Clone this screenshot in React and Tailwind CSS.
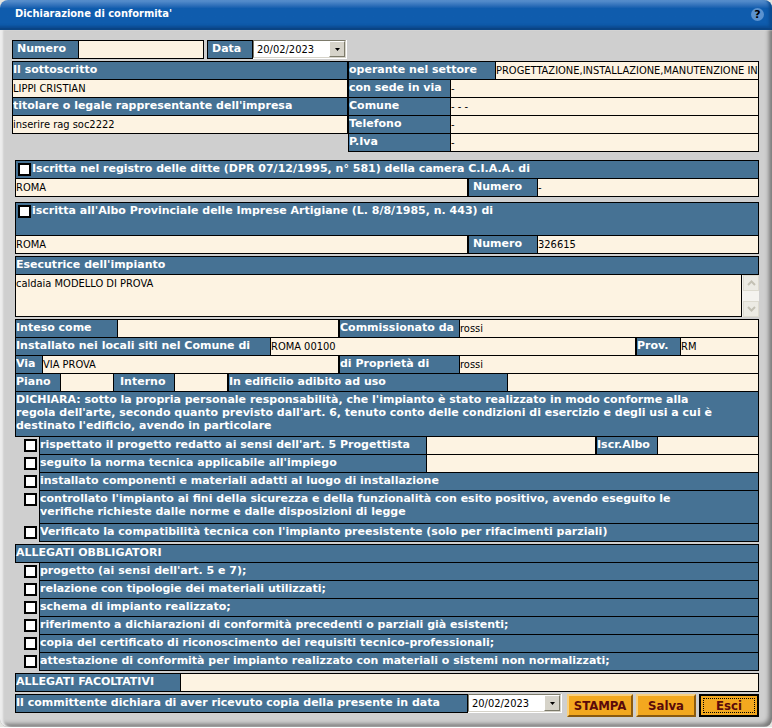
import React, { useState } from "react";

const SETTORE =
  "PROGETTAZIONE,INSTALLAZIONE,MANUTENZIONE IN EFFICIENZA DI IMPIANTI";

const labelBase =
  "shrink-0 bg-[#467294] text-white font-bold text-[11px] leading-[15px] border-r border-b border-black whitespace-nowrap overflow-hidden";

const Label = ({ htmlFor, className = "w-full", children }) => (
  <label htmlFor={htmlFor} className={`${labelBase} h-full ${className}`}>
    {children}
  </label>
);

const Field = ({ id, value = "", className = "flex-1" }) => (
  <input
    id={id}
    type="text"
    defaultValue={value}
    className={`h-full min-w-0 bg-[#fdf3e2] border-r border-b border-black text-[11px] leading-[15px] text-black outline-none font-['DejaVu_Sans_Condensed','Noto_Sans',sans-serif] ${className}`}
  />
);

const Row = ({ children }) => (
  <div className="flex h-[18px] border-l border-black">{children}</div>
);

const Check = ({ id, className = "" }) => (
  <input
    id={id}
    type="checkbox"
    className={`block shrink-0 appearance-none w-[13px] h-[13px] bg-white border-2 border-black checked:bg-black ${className}`}
  />
);

const DateSelect = ({ id }) => (
  <div className="relative shrink-0 w-[94px] h-[19px] border-r border-b border-white">
    <select
      id={id}
      defaultValue="20/02/2023"
      className="block appearance-none w-full h-full bg-white border border-t-[#7c7a6a] border-l-[#7c7a6a] border-r-[#d6d3c9] border-b-[#d6d3c9] pl-[3px] pt-px text-[11px] leading-[15px] text-black outline-none font-['DejaVu_Sans_Condensed','Noto_Sans',sans-serif]"
    >
      <option>20/02/2023</option>
    </select>
    <span className="pointer-events-none absolute right-px top-px bottom-px w-4 flex items-center justify-center bg-[#d6d3c9] border border-t-white border-l-white border-r-[#7c7a6a] border-b-[#7c7a6a]">
      <svg width="5" height="3" viewBox="0 0 5 3">
        <path d="M0 0h5L2.5 3z" fill="#000" />
      </svg>
    </span>
  </div>
);

const CheckRow = ({ id, text, tall, children }) => (
  <div className={tall ? "flex h-[33px]" : "flex h-[18px]"}>
    <div className="shrink-0 w-6 pl-[9px] pt-[2px]">
      <Check id={id} />
    </div>
    {children ? (
      children
    ) : (
      <label
        htmlFor={id}
        className={
          tall
            ? "flex-1 min-w-0 bg-[#467294] text-white font-bold text-[11px] leading-[13px] border-l border-r border-b border-black pt-px"
            : "flex-1 min-w-0 bg-[#467294] text-white font-bold text-[11px] leading-[15px] border-l border-r border-b border-black whitespace-nowrap overflow-hidden"
        }
      >
        {text}
      </label>
    )}
  </div>
);

const Button = ({ className, children, onClick }) => (
  <button
    type="button"
    onClick={onClick}
    className={`h-[23px] bg-[#f3a81f] text-[#5a0a0a] font-bold text-[13px] leading-none font-['DejaVu_Sans_Condensed','Noto_Sans',sans-serif] ${className}`}
  >
    {children}
  </button>
);

const obbligatori = [
  "progetto (ai sensi dell'art. 5 e 7);",
  "relazione con tipologie dei materiali utilizzati;",
  "schema di impianto realizzato;",
  "riferimento a dichiarazioni di conformità precedenti o parziali già esistenti;",
  "copia del certificato di riconoscimento dei requisiti tecnico-professionali;",
  "attestazione di conformità per impianto realizzato con materiali o sistemi non normalizzati;",
];

const App = () => {
  const [open, setOpen] = useState(true);

  if (!open) return null;

  return (
    <div className="w-full bg-[#e4e4e0] font-['DejaVu_Sans',sans-serif]">
      <header className="flex items-center justify-between h-[30px] rounded-t-lg pl-[15px] pr-2 bg-linear-to-b from-[#5c93cf] via-[#0f5cad] via-30% to-[#0f5cad] border-b-2 border-[#0a4484] shadow-[inset_-3px_-2px_3px_#0b4a8f]">
        <h1 className="text-white font-bold text-[11px] font-['DejaVu_Sans_Condensed','Noto_Sans',sans-serif]">
          Dichiarazione di conformita'
        </h1>
        <button
          type="button"
          aria-label="Aiuto"
          className="w-[13px] h-[13px] rounded-full bg-[#5b92cf] text-black text-[11px] leading-[13px] font-bold"
        >
          ?
        </button>
      </header>

      <form className="bg-[#cfcfcf] rounded-b-lg pl-[15px] pr-[13px] pt-[10px] pb-[10px] shadow-[inset_3px_0_2px_#ededed,inset_-3px_-3px_4px_#777]">
        <div className="-ml-[3px]">
          <div className="flex gap-[3px] mb-[2px]">
            <div className="flex w-[192px] h-[19px] border-t border-l border-black">
              <Label htmlFor="numero" className="w-[66px] pl-1">
                Numero
              </Label>
              <Field id="numero" />
            </div>
            <div className="flex">
              <div className="flex h-[19px] border-t border-l border-black">
                <Label htmlFor="data" className="w-[45px] pl-1">
                  Data
                </Label>
              </div>
              <DateSelect id="data" />
            </div>
          </div>

          <div className="flex items-start">
            <div className="w-[336px] shrink-0 border-t border-black">
              <Row>
                <Label htmlFor="sottoscritto">Il sottoscritto</Label>
              </Row>
              <Row>
                <Field id="sottoscritto" value="LIPPI CRISTIAN" />
              </Row>
              <Row>
                <Label htmlFor="impresa">
                  titolare o legale rappresentante dell'impresa
                </Label>
              </Row>
              <Row>
                <Field id="impresa" value="inserire rag soc2222" />
              </Row>
            </div>
            <div className="flex-1 min-w-0 border-t border-black">
              <Row>
                <Label htmlFor="settore" className="w-[147px]">
                  operante nel settore
                </Label>
                <Field id="settore" value={SETTORE} />
              </Row>
              <Row>
                <Label htmlFor="sede" className="w-[102px]">
                  con sede in via
                </Label>
                <Field id="sede" value="-" />
              </Row>
              <Row>
                <Label htmlFor="comune" className="w-[102px]">
                  Comune
                </Label>
                <Field id="comune" value="- - -" />
              </Row>
              <Row>
                <Label htmlFor="telefono" className="w-[102px]">
                  Telefono
                </Label>
                <Field id="telefono" value="-" />
              </Row>
              <Row>
                <Label htmlFor="piva" className="w-[102px]">
                  P.Iva
                </Label>
                <Field id="piva" value="-" />
              </Row>
            </div>
          </div>
        </div>

        <div className="mt-2 border-t border-black">
          <div className="flex h-[18px] pl-[2px] bg-[#467294] border-l border-r border-b border-black">
            <Check id="registro" className="mt-[2px]" />
            <label
              htmlFor="registro"
              className="text-white font-bold text-[11px] leading-[15px] pl-px whitespace-nowrap"
            >
              Iscritta nel registro delle ditte (DPR 07/12/1995, n° 581) della
              camera C.I.A.A. di
            </label>
          </div>
          <Row>
            <Field id="ciaa" value="ROMA" />
            <Label htmlFor="numeroCiaa" className="w-[70px] pl-1 border-l">
              Numero
            </Label>
            <Field
              id="numeroCiaa"
              value="-"
              className="w-[221px] shrink-0"
            />
          </Row>
        </div>

        <div className="mt-[5px] border-t border-black">
          <div className="flex h-[33px] pl-[2px] bg-[#467294] border-l border-r border-b border-black">
            <Check id="albo" className="mt-[2px]" />
            <label
              htmlFor="albo"
              className="text-white font-bold text-[11px] leading-[15px] pl-px whitespace-nowrap"
            >
              iscritta all'Albo Provinciale delle Imprese Artigiane (L.
              8/8/1985, n. 443) di
            </label>
          </div>
          <Row>
            <Field id="alboComune" value="ROMA" />
            <Label htmlFor="numeroAlbo" className="w-[70px] pl-1 border-l">
              Numero
            </Label>
            <Field
              id="numeroAlbo"
              value="326615"
              className="w-[221px] shrink-0"
            />
          </Row>
        </div>

        <div className="mt-[2px] border-t border-black">
          <Row>
            <Label htmlFor="impianto">Esecutrice dell'impianto</Label>
          </Row>
          <div className="flex h-[42px]">
            <textarea
              id="impianto"
              defaultValue="caldaia MODELLO DI PROVA"
              className="flex-1 min-w-0 resize-none overflow-hidden bg-[#fdf3e2] border-l border-r border-b border-black pt-px text-[11px] leading-[15px] text-black outline-none font-['DejaVu_Sans_Condensed','Noto_Sans',sans-serif]"
            />
            <div className="w-[17px] flex flex-col justify-between bg-[#f4f3ef] pl-px">
              <button
                type="button"
                aria-label="Scorri su"
                className="h-4 flex items-center justify-center bg-[#ecebe4] border border-[#dddbd0]"
              >
                <svg width="9" height="6" viewBox="0 0 9 6">
                  <path
                    d="M1 5l3.5-3.5L8 5"
                    fill="none"
                    stroke="#c3c1b4"
                    strokeWidth="2"
                  />
                </svg>
              </button>
              <button
                type="button"
                aria-label="Scorri giù"
                className="h-4 flex items-center justify-center bg-[#ecebe4] border border-[#dddbd0]"
              >
                <svg width="9" height="6" viewBox="0 0 9 6">
                  <path
                    d="M1 1l3.5 3.5L8 1"
                    fill="none"
                    stroke="#c3c1b4"
                    strokeWidth="2"
                  />
                </svg>
              </button>
            </div>
          </div>
        </div>

        <div className="mt-[2px] border-t border-black">
          <Row>
            <Label htmlFor="inteso" className="w-[102px]">
              Inteso come
            </Label>
            <Field id="inteso" />
            <Label htmlFor="commissionato" className="w-[121px] border-l">
              Commissionato da
            </Label>
            <Field
              id="commissionato"
              value="rossi"
              className="w-[299px] shrink-0"
            />
          </Row>
          <Row>
            <Label htmlFor="locali" className="w-[255px]">
              Installato nei locali siti nel Comune di
            </Label>
            <Field id="locali" value="ROMA 00100" />
            <Label htmlFor="prov" className="w-[45px] border-l">
              Prov.
            </Label>
            <Field id="prov" value="RM" className="w-[78px] shrink-0" />
          </Row>
          <Row>
            <Label htmlFor="via" className="w-[27px]">
              Via
            </Label>
            <Field id="via" value="VIA PROVA" />
            <Label htmlFor="proprieta" className="w-[121px] border-l">
              di Proprietà di
            </Label>
            <Field
              id="proprieta"
              value="rossi"
              className="w-[299px] shrink-0"
            />
          </Row>
          <Row>
            <Label htmlFor="piano" className="w-[45px]">
              Piano
            </Label>
            <Field id="piano" className="w-[53px] shrink-0" />
            <Label htmlFor="interno" className="w-[61px] pl-1.5">
              Interno
            </Label>
            <Field id="interno" className="w-[53px] shrink-0" />
            <Label htmlFor="uso" className="w-[280px] border-l">
              In edificiio adibito ad uso
            </Label>
            <Field id="uso" />
          </Row>
          <p className="h-[45px] bg-[#467294] text-white font-bold text-[11px] leading-[13px] border-l border-r border-b border-black pt-px">
            DICHIARA: sotto la propria personale responsabilità, che l'impianto
            è stato realizzato in modo conforme alla
            <br />
            regola dell'arte, secondo quanto previsto dall'art. 6, tenuto conto
            delle condizioni di esercizio e degli usi a cui è
            <br />
            destinato l'edificio, avendo in particolare
          </p>
          <CheckRow id="c1">
            <Label htmlFor="c1" className="w-[388px] border-l">
              rispettato il progetto redatto ai sensi dell'art. 5 Progettista
            </Label>
            <Field id="progettista" />
            <Label htmlFor="iscr" className="w-[62px] border-l">
              Iscr.Albo
            </Label>
            <Field id="iscr" className="w-[101px] shrink-0" />
          </CheckRow>
          <CheckRow id="c2">
            <Label htmlFor="c2" className="w-[388px] border-l">
              seguito la norma tecnica applicabile all'impiego
            </Label>
            <Field id="norma" />
          </CheckRow>
          <CheckRow
            id="c3"
            text="installato componenti e materiali adatti al luogo di installazione"
          />
          <CheckRow
            id="c4"
            tall
            text={
              <>
                controllato l'impianto ai fini della sicurezza e della
                funzionalità con esito positivo, avendo eseguito le
                <br />
                verifiche richieste dalle norme e dalle disposizioni di legge
              </>
            }
          />
          <CheckRow
            id="c5"
            text="Verificato la compatibilità tecnica con l'impianto preesistente (solo per rifacimenti parziali)"
          />
        </div>

        <div className="mt-[2px] border-t border-black">
          <h2 className="h-[18px] bg-[#467294] text-white font-bold text-[11px] leading-[15px] border-l border-r border-b border-black">
            ALLEGATI OBBLIGATORI
          </h2>
          {obbligatori.map((text, i) => (
            <CheckRow key={i} id={`allegato${i}`} text={text} />
          ))}
        </div>

        <div className="mt-[2px] border-t border-black">
          <Row>
            <Label htmlFor="facoltativi" className="w-[165px]">
              ALLEGATI FACOLTATIVI
            </Label>
            <Field id="facoltativi" />
          </Row>
        </div>

        <div className="mt-[2px] flex items-start">
          <div className="flex-1 min-w-0 flex h-[19px] border-t border-l border-black">
            <Label htmlFor="dataCopia">
              Il committente dichiara di aver ricevuto copia della presente in
              data
            </Label>
          </div>
          <DateSelect id="dataCopia" />
          <div className="flex gap-[3px] pl-[5px]">
            <Button className="w-[66px] border-2 border-t-[#f9cf7c] border-l-[#f9cf7c] border-r-[#8a5a10] border-b-[#8a5a10]">
              STAMPA
            </Button>
            <Button className="w-[60px] border-2 border-t-[#f9cf7c] border-l-[#f9cf7c] border-r-[#8a5a10] border-b-[#8a5a10]">
              Salva
            </Button>
            <Button
              className="w-[60px] border-2 border-black p-[2px]"
              onClick={() => setOpen(false)}
            >
              <span className="flex h-full items-center justify-center border border-dotted border-black">
                Esci
              </span>
            </Button>
          </div>
        </div>
      </form>
    </div>
  );
};

export default App;
